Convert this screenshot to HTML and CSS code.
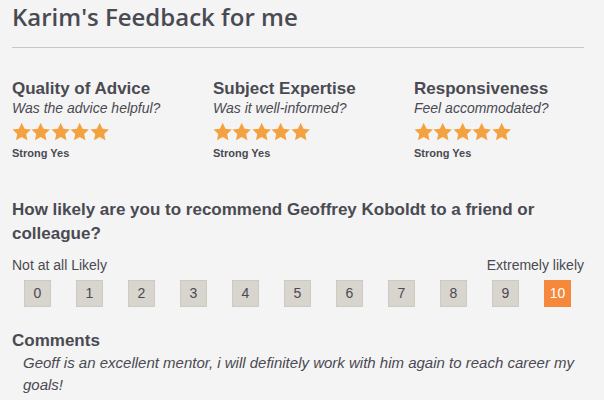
FILE: index.html
```html
<!DOCTYPE html>
<html>
<head>
<meta charset="utf-8">
<link rel="stylesheet" href="styles.css">
</head>
<body>
<div class="page">
  <h1 class="title">Karim's Feedback for me</h1>
  <div class="rule"></div>
  <div class="ratings">
    <div class="rating">
      <div class="r-head">Quality of Advice</div>
      <div class="r-sub">Was the advice helpful?</div>
      <div class="stars">
        <svg class="star" viewBox="0 0 20 19"><path d="M10 0.5l2.9 6.1 6.6 0.8-4.9 4.6 1.3 6.6L10 15.3l-5.9 3.3 1.3-6.6L0.5 7.4l6.6-0.8z"/></svg>
        <svg class="star" viewBox="0 0 20 19"><path d="M10 0.5l2.9 6.1 6.6 0.8-4.9 4.6 1.3 6.6L10 15.3l-5.9 3.3 1.3-6.6L0.5 7.4l6.6-0.8z"/></svg>
        <svg class="star" viewBox="0 0 20 19"><path d="M10 0.5l2.9 6.1 6.6 0.8-4.9 4.6 1.3 6.6L10 15.3l-5.9 3.3 1.3-6.6L0.5 7.4l6.6-0.8z"/></svg>
        <svg class="star" viewBox="0 0 20 19"><path d="M10 0.5l2.9 6.1 6.6 0.8-4.9 4.6 1.3 6.6L10 15.3l-5.9 3.3 1.3-6.6L0.5 7.4l6.6-0.8z"/></svg>
        <svg class="star" viewBox="0 0 20 19"><path d="M10 0.5l2.9 6.1 6.6 0.8-4.9 4.6 1.3 6.6L10 15.3l-5.9 3.3 1.3-6.6L0.5 7.4l6.6-0.8z"/></svg>
      </div>
      <div class="r-label">Strong Yes</div>
    </div>
    <div class="rating">
      <div class="r-head">Subject Expertise</div>
      <div class="r-sub">Was it well-informed?</div>
      <div class="stars">
        <svg class="star" viewBox="0 0 20 19"><path d="M10 0.5l2.9 6.1 6.6 0.8-4.9 4.6 1.3 6.6L10 15.3l-5.9 3.3 1.3-6.6L0.5 7.4l6.6-0.8z"/></svg>
        <svg class="star" viewBox="0 0 20 19"><path d="M10 0.5l2.9 6.1 6.6 0.8-4.9 4.6 1.3 6.6L10 15.3l-5.9 3.3 1.3-6.6L0.5 7.4l6.6-0.8z"/></svg>
        <svg class="star" viewBox="0 0 20 19"><path d="M10 0.5l2.9 6.1 6.6 0.8-4.9 4.6 1.3 6.6L10 15.3l-5.9 3.3 1.3-6.6L0.5 7.4l6.6-0.8z"/></svg>
        <svg class="star" viewBox="0 0 20 19"><path d="M10 0.5l2.9 6.1 6.6 0.8-4.9 4.6 1.3 6.6L10 15.3l-5.9 3.3 1.3-6.6L0.5 7.4l6.6-0.8z"/></svg>
        <svg class="star" viewBox="0 0 20 19"><path d="M10 0.5l2.9 6.1 6.6 0.8-4.9 4.6 1.3 6.6L10 15.3l-5.9 3.3 1.3-6.6L0.5 7.4l6.6-0.8z"/></svg>
      </div>
      <div class="r-label">Strong Yes</div>
    </div>
    <div class="rating">
      <div class="r-head">Responsiveness</div>
      <div class="r-sub">Feel accommodated?</div>
      <div class="stars">
        <svg class="star" viewBox="0 0 20 19"><path d="M10 0.5l2.9 6.1 6.6 0.8-4.9 4.6 1.3 6.6L10 15.3l-5.9 3.3 1.3-6.6L0.5 7.4l6.6-0.8z"/></svg>
        <svg class="star" viewBox="0 0 20 19"><path d="M10 0.5l2.9 6.1 6.6 0.8-4.9 4.6 1.3 6.6L10 15.3l-5.9 3.3 1.3-6.6L0.5 7.4l6.6-0.8z"/></svg>
        <svg class="star" viewBox="0 0 20 19"><path d="M10 0.5l2.9 6.1 6.6 0.8-4.9 4.6 1.3 6.6L10 15.3l-5.9 3.3 1.3-6.6L0.5 7.4l6.6-0.8z"/></svg>
        <svg class="star" viewBox="0 0 20 19"><path d="M10 0.5l2.9 6.1 6.6 0.8-4.9 4.6 1.3 6.6L10 15.3l-5.9 3.3 1.3-6.6L0.5 7.4l6.6-0.8z"/></svg>
        <svg class="star" viewBox="0 0 20 19"><path d="M10 0.5l2.9 6.1 6.6 0.8-4.9 4.6 1.3 6.6L10 15.3l-5.9 3.3 1.3-6.6L0.5 7.4l6.6-0.8z"/></svg>
      </div>
      <div class="r-label">Strong Yes</div>
    </div>
  </div>
  <div class="question">How likely are you to recommend Geoffrey Koboldt to a friend or colleague?</div>
  <div class="scale-labels">
    <span>Not at all Likely</span>
    <span>Extremely likely</span>
  </div>
  <div class="scale">
    <div class="box">0</div>
    <div class="box">1</div>
    <div class="box">2</div>
    <div class="box">3</div>
    <div class="box">4</div>
    <div class="box">5</div>
    <div class="box">6</div>
    <div class="box">7</div>
    <div class="box">8</div>
    <div class="box">9</div>
    <div class="box selected">10</div>
  </div>
  <div class="c-head">Comments</div>
  <div class="c-text">Geoff is an excellent mentor, i will definitely work with him again to reach career my goals!</div>
</div>
</body>
</html>
```

FILE: styles.css
```css
html, body {
  margin: 0;
  padding: 0;
  background: #f4f4f4;
}
body {
  font-family: "Liberation Sans", Arial, sans-serif;
  color: #4a4a52;
}
.page {
  padding: 0 20px 0 12px;
}
.title {
  margin: 0;
  padding-top: 0;
  font-family: "Open Sans", sans-serif;
  font-weight: 600;
  font-size: 24px;
  line-height: 34px;
  color: #4a4a52;
}
.rule {
  margin-top: 13px;
  height: 1px;
  background: #c8c8c8;
}
.ratings {
  display: flex;
  margin-top: 31px;
}
.rating {
  flex: 0 0 201px;
}
.rating:last-child {
  flex: 1 1 auto;
}
.r-head {
  font-weight: bold;
  font-size: 17px;
  line-height: 20px;
}
.r-sub {
  font-style: italic;
  font-size: 14px;
  line-height: 18px;
}
.stars {
  display: flex;
  margin-top: 5px;
  height: 19px;
}
.star {
  width: 19.4px;
  height: 19px;
  fill: #f4a140;
}
.r-label {
  font-weight: bold;
  font-size: 11px;
  line-height: 13px;
  margin-top: 6px;
}
.question {
  margin-top: 38px;
  font-weight: bold;
  font-size: 17px;
  line-height: 24px;
}
.scale-labels {
  display: flex;
  justify-content: space-between;
  margin-top: 11px;
  font-size: 14px;
  line-height: 17px;
}
.scale {
  display: flex;
  gap: 25px;
  margin-top: 6px;
  padding-left: 12px;
}
.box {
  width: 25px;
  height: 25px;
  border: 1px solid #cdc9c3;
  background: #d8d4ce;
  font-size: 14px;
  line-height: 25px;
  text-align: center;
  color: #4a4a52;
}
.box.selected {
  background: #f5883a;
  border-color: #f5883a;
  color: #ffffff;
}
.c-head {
  margin-top: 24px;
  font-weight: bold;
  font-size: 17px;
  line-height: 19px;
}
.c-text {
  margin-top: 2px;
  padding-left: 11px;
  font-style: italic;
  font-size: 15px;
  line-height: 22px;
}
```
